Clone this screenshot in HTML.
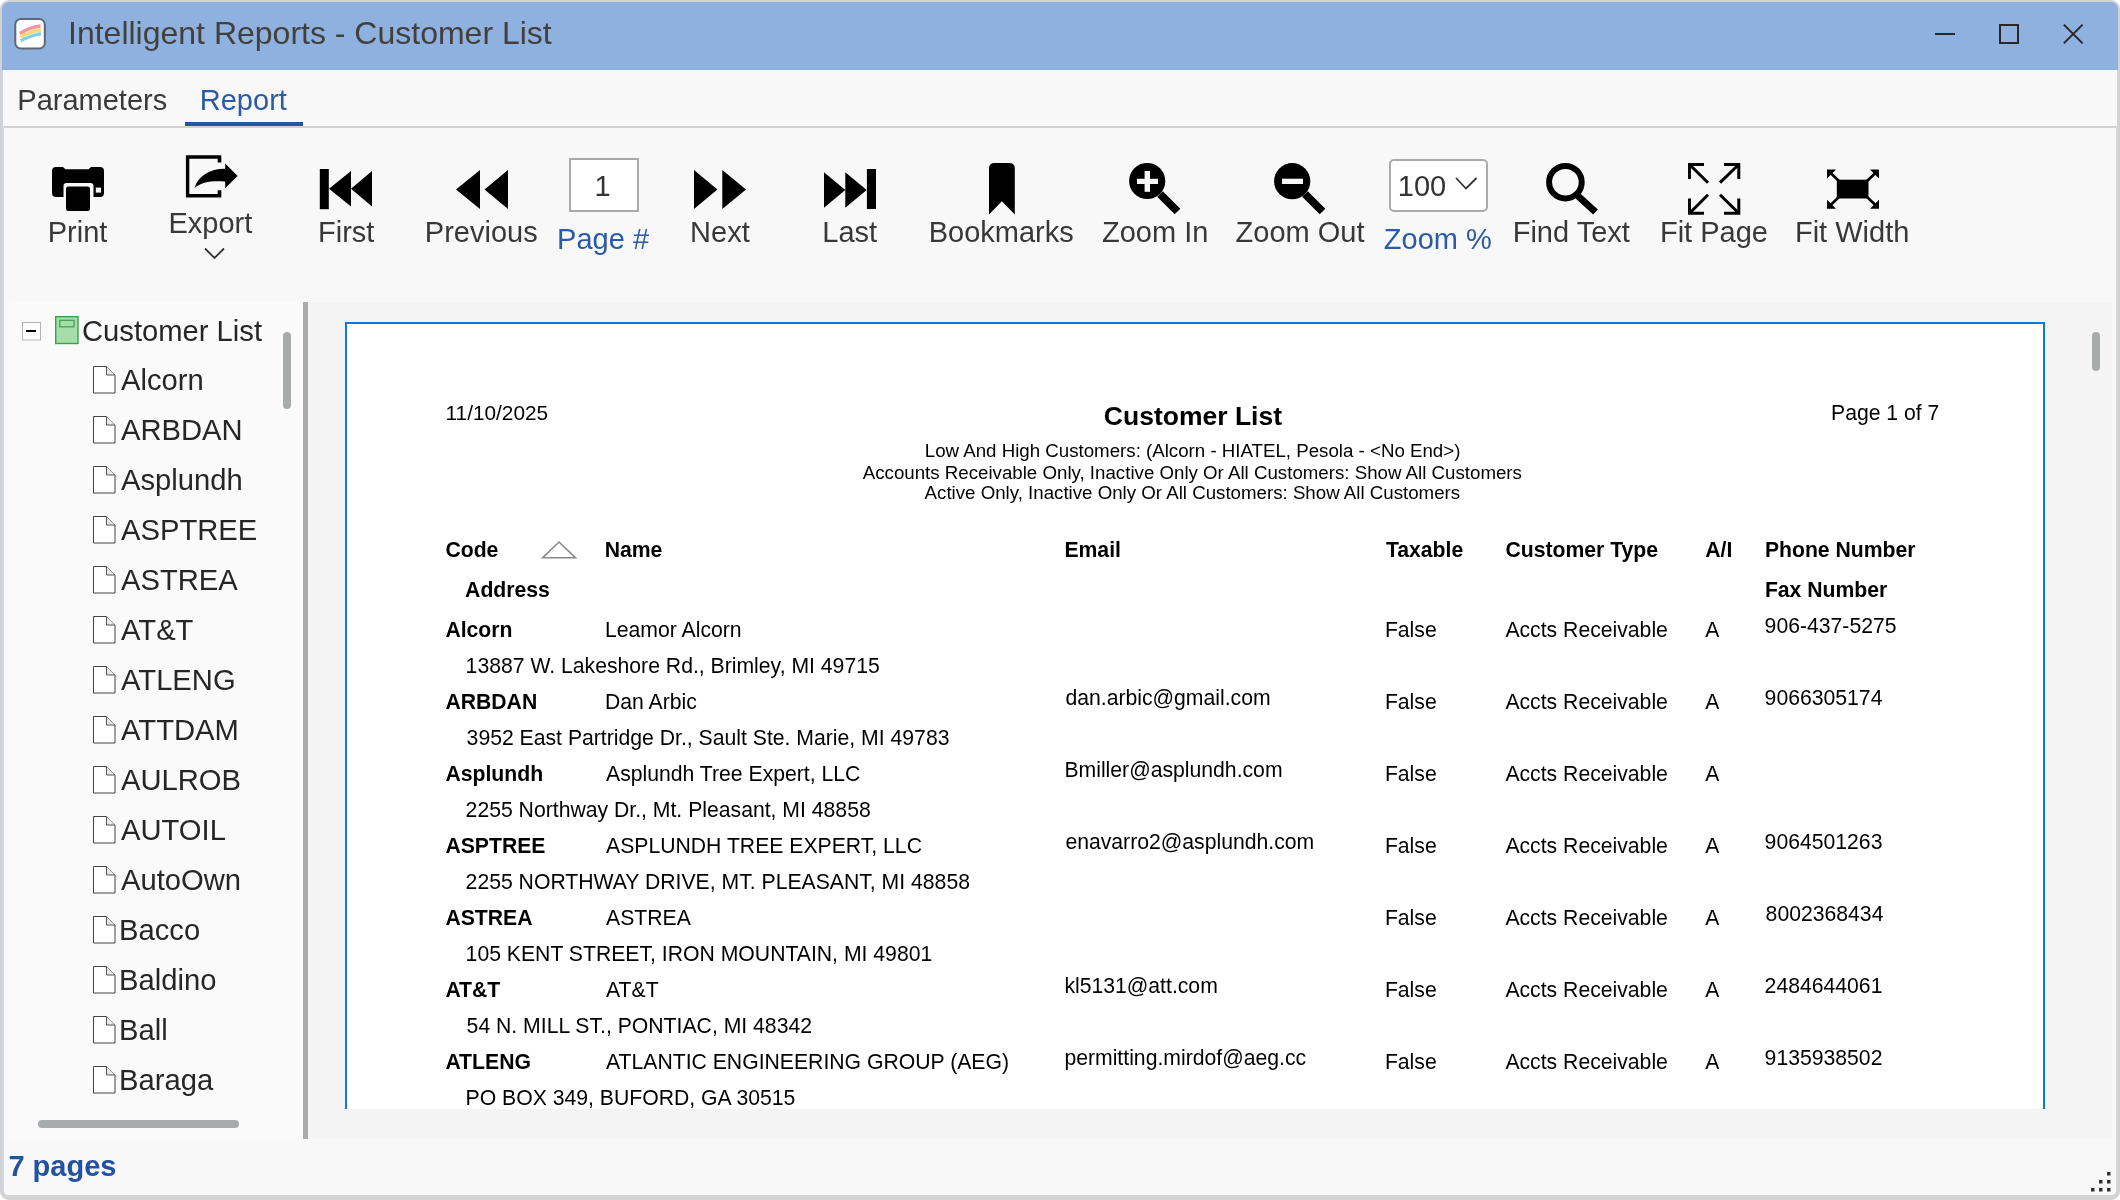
<!DOCTYPE html>
<html><head><meta charset="utf-8"><title>Intelligent Reports - Customer List</title><style>
html,body{margin:0;padding:0;}
body{width:2120px;height:1200px;position:relative;overflow:hidden;background:#ffffff;font-family:"Liberation Sans",sans-serif;}
.t{position:absolute;white-space:pre;}
#root{position:absolute;left:0;top:0;width:2120px;height:1200px;will-change:transform;}
.abs{position:absolute;}
svg{position:absolute;overflow:visible;}
</style></head><body><div id="root">
<div class="abs" style="left:0;top:0;width:2120px;height:1200px;background:#d2d2d2;border-radius:9px;"></div>
<div class="abs" style="left:3px;top:2px;width:2114px;height:1194px;background:#f8f8f8;border-radius:7px;overflow:hidden;"></div>
<div class="abs" style="left:2px;top:2px;width:2116px;height:68px;background:#8fb1df;border-radius:7px 7px 0 0;"></div>
<div class="abs" style="left:2px;top:70px;width:1px;height:1120px;background:#cfd5de;"></div><div class="abs" style="left:2117px;top:70px;width:1px;height:1120px;background:#cfd5de;"></div>
<div class="t" style="left:68.00px;top:17.00px;font-size:32px;line-height:32px;color:#423f3c;">Intelligent Reports - Customer List</div>
<svg style="left:0;top:0" width="2120" height="80">
<defs><filter id="bl" x="-20%" y="-20%" width="140%" height="140%"><feGaussianBlur stdDeviation="0.55"/></filter></defs>
<rect x="15.3" y="19" width="29.5" height="29.5" rx="5.5" fill="#fff" stroke="#5d6676" stroke-width="2" filter="url(#bl)"/>
<g filter="url(#bl)" fill="none" stroke-width="3.3" opacity="0.85">
<path d="M19.8 33.5 C26 29.5, 33 27, 40.5 26" stroke="#f4878e"/>
<path d="M20.3 37.2 C26.5 33.3, 33.5 31, 41 30" stroke="#fbd25c"/>
<path d="M20.8 40.8 C27 37, 34 35, 41 33.6" stroke="#63c9e8"/>
</g>
<line x1="1935" y1="34" x2="1955" y2="34" stroke="#2b2824" stroke-width="2"/>
<rect x="2000" y="25" width="18" height="18" fill="none" stroke="#2b2824" stroke-width="2"/>
<path d="M2063.8 24.6 L2082.6 43.4 M2082.6 24.6 L2063.8 43.4" stroke="#2b2824" stroke-width="2" fill="none"/>
</svg>
<div class="t" style="left:17.30px;top:86.00px;font-size:29px;line-height:29px;color:#3a3a3a;">Parameters</div>
<div class="t" style="left:199.80px;top:86.00px;font-size:29px;line-height:29px;color:#2b5aa6;">Report</div>
<div class="abs" style="left:185px;top:122px;width:118px;height:4px;background:#2456a4;"></div>
<div class="abs" style="left:3px;top:126px;width:2114px;height:2px;background:#d3d3d3;"></div>
<div class="abs" style="left:3px;top:128px;width:2112px;height:1067px;border:1px solid #d5d5d5;border-top:none;border-radius:0 0 5px 5px;background:#f8f8f8;"></div>
<div class="t" style="left:47.71px;top:218.00px;font-size:29px;line-height:29px;color:#383838;">Print</div>
<div class="t" style="left:168.42px;top:209.00px;font-size:29px;line-height:29px;color:#383838;">Export</div>
<div class="t" style="left:318.04px;top:218.00px;font-size:29px;line-height:29px;color:#383838;">First</div>
<div class="t" style="left:424.84px;top:218.00px;font-size:29px;line-height:29px;color:#383838;">Previous</div>
<div class="t" style="left:690.11px;top:218.00px;font-size:29px;line-height:29px;color:#383838;">Next</div>
<div class="t" style="left:822.32px;top:218.00px;font-size:29px;line-height:29px;color:#383838;">Last</div>
<div class="t" style="left:928.73px;top:218.00px;font-size:29px;line-height:29px;color:#383838;">Bookmarks</div>
<div class="t" style="left:1101.98px;top:218.00px;font-size:29px;line-height:29px;color:#383838;">Zoom In</div>
<div class="t" style="left:1235.56px;top:218.00px;font-size:29px;line-height:29px;color:#383838;">Zoom Out</div>
<div class="t" style="left:1512.70px;top:218.00px;font-size:29px;line-height:29px;color:#383838;">Find Text</div>
<div class="t" style="left:1659.96px;top:218.00px;font-size:29px;line-height:29px;color:#383838;">Fit Page</div>
<div class="t" style="left:1794.96px;top:218.00px;font-size:29px;line-height:29px;color:#383838;">Fit Width</div>
<div class="t" style="left:557.11px;top:225.00px;font-size:29px;line-height:29px;color:#2b5aa6;">Page #</div>
<div class="t" style="left:1383.81px;top:225.00px;font-size:29px;line-height:29px;color:#2b5aa6;">Zoom %</div>
<div class="abs" style="left:569px;top:158px;width:66px;height:50px;background:#fff;border:2px solid #a9a9a9;"></div>
<div class="t" style="left:594.50px;top:172.00px;font-size:29px;line-height:29px;color:#333;">1</div>
<div class="abs" style="left:1388.5px;top:159px;width:95px;height:49px;background:#fff;border:2px solid #ababab;border-radius:5px;"></div>
<div class="t" style="left:1397.87px;top:172.00px;font-size:29px;line-height:29px;color:#333;">100</div>
<svg style="left:0;top:0" width="2120" height="300">
<!-- print -->
<path d="M52 171 Q52 167 56 167 L63 167 L65.5 169.2 L88.5 169.2 L91 167 L100 167 Q104 167 104 171 L104 193 Q104 197 100 197 L93.5 197 L93.5 186 Q93.5 183 90.5 183 L66.5 183 Q63.5 183 63.5 186 L63.5 197 L56 197 Q52 197 52 193 Z" fill="#000"/>
<rect x="66" y="186.5" width="24" height="24.5" rx="2.5" fill="#000"/>
<rect x="95.8" y="187.6" width="5.2" height="5" fill="#f8f8f8"/>
<!-- export -->
<path d="M185.9 155.3 L221.3 155.3 L221.3 162.5 L217.7 162.5 L217.7 158.7 L189.3 158.7 L189.3 194 L217.7 194 L217.7 190.2 L221.3 190.2 L221.3 197.4 L185.9 197.4 Z" fill="#000"/>
<path d="M194.5 188 C198 176, 210 168.5, 225.2 168.7 L225.2 163.4 L237.6 175.9 L225.2 188.3 L225.2 181.5 C212 180.5, 201 182, 194.5 188 Z" fill="#000"/>
<path d="M205 248.5 L214.5 258 L224 248.5" stroke="#333" stroke-width="1.8" fill="none"/>
<!-- first -->
<rect x="319.8" y="169" width="9" height="40.2" fill="#000"/>
<path d="M329 188.7 L351 171 L351 206.4 Z M351 188.7 L372 171 L372 206.4 Z" fill="#000"/>
<!-- previous -->
<path d="M456 189.5 L480 170 L480 209 Z M484.5 189.5 L508 170 L508 209 Z" fill="#000"/>
<!-- next -->
<path d="M694 170 L717.4 189.5 L694 209 Z M722.3 170 L746 189.5 L722.3 209 Z" fill="#000"/>
<!-- last -->
<path d="M824 172.3 L845.3 190 L824 207.8 Z M845.3 172.3 L866.7 190 L845.3 207.8 Z" fill="#000"/>
<rect x="866.9" y="169" width="9.1" height="40" fill="#000"/>
<!-- bookmark -->
<path d="M989 168.5 Q989 163 994.5 163 L1009.3 163 Q1014.8 163 1014.8 168.5 L1014.8 214.6 L1001.9 201.3 L989 214.6 Z" fill="#000"/>
<!-- zoom in -->
<circle cx="1147.2" cy="181" r="18.1" fill="#000"/>
<line x1="1160" y1="194" x2="1177.5" y2="211.5" stroke="#000" stroke-width="8"/>
<rect x="1137" y="178.8" width="21" height="5.2" fill="#f8f8f8"/>
<rect x="1144.6" y="171" width="5.4" height="20.8" fill="#f8f8f8"/>
<!-- zoom out -->
<circle cx="1292.2" cy="181.2" r="18.1" fill="#000"/>
<line x1="1305" y1="194" x2="1322.5" y2="211.5" stroke="#000" stroke-width="8"/>
<rect x="1282" y="178.7" width="21" height="5.3" fill="#f8f8f8"/>
<!-- combobox chevron -->
<path d="M1456 178 L1466 188.5 L1476.5 178" stroke="#333" stroke-width="1.8" fill="none"/>
<!-- find -->
<circle cx="1565.4" cy="182.2" r="16.3" fill="none" stroke="#000" stroke-width="6"/>
<line x1="1578" y1="196" x2="1595.5" y2="212" stroke="#000" stroke-width="7"/>
<!-- fit page -->
<g stroke="#000" stroke-width="3" fill="none">
<path d="M1704 164.5 L1689.5 164.5 L1689.5 179"/>
<path d="M1689.5 164.5 L1708 182.7"/>
<path d="M1724 164.5 L1738.8 164.5 L1738.8 179"/>
<path d="M1738.8 164.5 L1720 182.7"/>
<path d="M1689.5 198.5 L1689.5 213.3 L1704 213.3"/>
<path d="M1689.5 213.3 L1708 194.7"/>
<path d="M1738.8 198.5 L1738.8 213.3 L1724 213.3"/>
<path d="M1738.8 213.3 L1720 194.7"/>
</g>
<!-- fit width -->
<rect x="1836.8" y="179.7" width="31.7" height="18.8" fill="#000"/>
<g stroke="#000" stroke-width="2.6" fill="none">
<path d="M1829 171.5 L1840 182"/><path d="M1877 171.5 L1866 182"/>
<path d="M1829 206.5 L1840 196"/><path d="M1877 206.5 L1866 196"/>
</g>
<path d="M1827 169.5 L1836 169.5 L1827 178.5 Z M1879 169.5 L1870 169.5 L1879 178.5 Z M1827 208.8 L1836 208.8 L1827 199.8 Z M1879 208.8 L1870 208.8 L1879 199.8 Z" fill="#000"/>
</svg>
<div class="abs" style="left:8px;top:302px;width:295px;height:837px;background:#fafafa;border-top-left-radius:4px;"></div>
<div class="abs" style="left:303px;top:302px;width:5px;height:837px;background:#ababab;"></div>
<div class="abs" style="left:308px;top:302px;width:1804px;height:837px;background:#f4f4f4;"></div>
<div class="abs" style="left:345px;top:322px;width:1696px;height:785px;background:#fff;border:2px solid #0f78d4;border-bottom:none;"></div>
<div class="abs" style="left:2092px;top:332px;width:8px;height:39px;background:#a8abac;border-radius:4px;"></div>
<div class="abs" style="left:283px;top:332px;width:8px;height:77px;background:#a8abac;border-radius:4px;"></div>
<div class="abs" style="left:38px;top:1120px;width:201px;height:8px;background:#a8abac;border-radius:4px;"></div>
<svg style="left:0;top:0" width="400" height="1200">
<rect x="22.5" y="322.5" width="18" height="17.5" fill="#fff" stroke="#b4b4b4" stroke-width="1"/>
<rect x="26" y="330" width="10" height="2" fill="#000"/>
<rect x="55.7" y="316.7" width="22.3" height="26.8" fill="#a6dea9" stroke="#3aa04a" stroke-width="1.4"/>
<rect x="59.8" y="320.3" width="14.2" height="6.5" fill="#a6dea9" stroke="#3aa04a" stroke-width="1.2"/>
<path d="M93.5 366.5 L106.5 366.5 L115 375 L115 393 L93.5 393 Z" fill="#fff" stroke="#444" stroke-width="1"/>
<path d="M106.5 366.5 L106.5 375 L115 375" fill="#e8e8e8" stroke="#555" stroke-width="1"/>
<path d="M93.5 416.5 L106.5 416.5 L115 425 L115 443 L93.5 443 Z" fill="#fff" stroke="#444" stroke-width="1"/>
<path d="M106.5 416.5 L106.5 425 L115 425" fill="#e8e8e8" stroke="#555" stroke-width="1"/>
<path d="M93.5 466.5 L106.5 466.5 L115 475 L115 493 L93.5 493 Z" fill="#fff" stroke="#444" stroke-width="1"/>
<path d="M106.5 466.5 L106.5 475 L115 475" fill="#e8e8e8" stroke="#555" stroke-width="1"/>
<path d="M93.5 516.5 L106.5 516.5 L115 525 L115 543 L93.5 543 Z" fill="#fff" stroke="#444" stroke-width="1"/>
<path d="M106.5 516.5 L106.5 525 L115 525" fill="#e8e8e8" stroke="#555" stroke-width="1"/>
<path d="M93.5 566.5 L106.5 566.5 L115 575 L115 593 L93.5 593 Z" fill="#fff" stroke="#444" stroke-width="1"/>
<path d="M106.5 566.5 L106.5 575 L115 575" fill="#e8e8e8" stroke="#555" stroke-width="1"/>
<path d="M93.5 616.5 L106.5 616.5 L115 625 L115 643 L93.5 643 Z" fill="#fff" stroke="#444" stroke-width="1"/>
<path d="M106.5 616.5 L106.5 625 L115 625" fill="#e8e8e8" stroke="#555" stroke-width="1"/>
<path d="M93.5 666.5 L106.5 666.5 L115 675 L115 693 L93.5 693 Z" fill="#fff" stroke="#444" stroke-width="1"/>
<path d="M106.5 666.5 L106.5 675 L115 675" fill="#e8e8e8" stroke="#555" stroke-width="1"/>
<path d="M93.5 716.5 L106.5 716.5 L115 725 L115 743 L93.5 743 Z" fill="#fff" stroke="#444" stroke-width="1"/>
<path d="M106.5 716.5 L106.5 725 L115 725" fill="#e8e8e8" stroke="#555" stroke-width="1"/>
<path d="M93.5 766.5 L106.5 766.5 L115 775 L115 793 L93.5 793 Z" fill="#fff" stroke="#444" stroke-width="1"/>
<path d="M106.5 766.5 L106.5 775 L115 775" fill="#e8e8e8" stroke="#555" stroke-width="1"/>
<path d="M93.5 816.5 L106.5 816.5 L115 825 L115 843 L93.5 843 Z" fill="#fff" stroke="#444" stroke-width="1"/>
<path d="M106.5 816.5 L106.5 825 L115 825" fill="#e8e8e8" stroke="#555" stroke-width="1"/>
<path d="M93.5 866.5 L106.5 866.5 L115 875 L115 893 L93.5 893 Z" fill="#fff" stroke="#444" stroke-width="1"/>
<path d="M106.5 866.5 L106.5 875 L115 875" fill="#e8e8e8" stroke="#555" stroke-width="1"/>
<path d="M93.5 916.5 L106.5 916.5 L115 925 L115 943 L93.5 943 Z" fill="#fff" stroke="#444" stroke-width="1"/>
<path d="M106.5 916.5 L106.5 925 L115 925" fill="#e8e8e8" stroke="#555" stroke-width="1"/>
<path d="M93.5 966.5 L106.5 966.5 L115 975 L115 993 L93.5 993 Z" fill="#fff" stroke="#444" stroke-width="1"/>
<path d="M106.5 966.5 L106.5 975 L115 975" fill="#e8e8e8" stroke="#555" stroke-width="1"/>
<path d="M93.5 1016.5 L106.5 1016.5 L115 1025 L115 1043 L93.5 1043 Z" fill="#fff" stroke="#444" stroke-width="1"/>
<path d="M106.5 1016.5 L106.5 1025 L115 1025" fill="#e8e8e8" stroke="#555" stroke-width="1"/>
<path d="M93.5 1066.5 L106.5 1066.5 L115 1075 L115 1093 L93.5 1093 Z" fill="#fff" stroke="#444" stroke-width="1"/>
<path d="M106.5 1066.5 L106.5 1075 L115 1075" fill="#e8e8e8" stroke="#555" stroke-width="1"/>
</svg>
<div class="t" style="left:82.00px;top:317.00px;font-size:29.2px;line-height:29.2px;color:#262626;">Customer List</div>
<div class="t" style="left:121.00px;top:366.00px;font-size:29.2px;line-height:29.2px;color:#262626;">Alcorn</div>
<div class="t" style="left:121.00px;top:416.00px;font-size:29.2px;line-height:29.2px;color:#262626;">ARBDAN</div>
<div class="t" style="left:121.00px;top:466.00px;font-size:29.2px;line-height:29.2px;color:#262626;">Asplundh</div>
<div class="t" style="left:121.00px;top:516.00px;font-size:29.2px;line-height:29.2px;color:#262626;">ASPTREE</div>
<div class="t" style="left:121.00px;top:566.00px;font-size:29.2px;line-height:29.2px;color:#262626;">ASTREA</div>
<div class="t" style="left:121.00px;top:616.00px;font-size:29.2px;line-height:29.2px;color:#262626;">AT&amp;T</div>
<div class="t" style="left:121.00px;top:666.00px;font-size:29.2px;line-height:29.2px;color:#262626;">ATLENG</div>
<div class="t" style="left:121.00px;top:716.00px;font-size:29.2px;line-height:29.2px;color:#262626;">ATTDAM</div>
<div class="t" style="left:121.00px;top:766.00px;font-size:29.2px;line-height:29.2px;color:#262626;">AULROB</div>
<div class="t" style="left:121.00px;top:816.00px;font-size:29.2px;line-height:29.2px;color:#262626;">AUTOIL</div>
<div class="t" style="left:121.00px;top:866.00px;font-size:29.2px;line-height:29.2px;color:#262626;">AutoOwn</div>
<div class="t" style="left:119.00px;top:916.00px;font-size:29.2px;line-height:29.2px;color:#262626;">Bacco</div>
<div class="t" style="left:119.00px;top:966.00px;font-size:29.2px;line-height:29.2px;color:#262626;">Baldino</div>
<div class="t" style="left:119.00px;top:1016.00px;font-size:29.2px;line-height:29.2px;color:#262626;">Ball</div>
<div class="t" style="left:119.00px;top:1066.00px;font-size:29.2px;line-height:29.2px;color:#262626;">Baraga</div>
<div class="t" style="left:8.40px;top:1152.00px;font-size:29px;line-height:29px;color:#2352a0;font-weight:bold;">7 pages</div>
<svg style="left:0;top:0" width="2120" height="1200"><rect x="2107.0" y="1172" width="3.5" height="3.5" fill="#333"/><rect x="2099.0" y="1180" width="3.5" height="3.5" fill="#333"/><rect x="2107.0" y="1180" width="3.5" height="3.5" fill="#333"/><rect x="2091.0" y="1188" width="3.5" height="3.5" fill="#333"/><rect x="2099.0" y="1188" width="3.5" height="3.5" fill="#333"/><rect x="2107.0" y="1188" width="3.5" height="3.5" fill="#333"/></svg>
<div class="abs" style="left:0;top:0;width:2120px;height:1108.6px;overflow:hidden;">
<div class="t" style="left:445.60px;top:403.00px;font-size:20.8px;line-height:20.8px;color:#000;">11/10/2025</div>
<div class="t" style="left:1103.83px;top:403.00px;font-size:26.5px;line-height:26.5px;color:#000;font-weight:bold;">Customer List</div>
<div class="t" style="left:1831.00px;top:402.00px;font-size:21.2px;line-height:21.2px;color:#000;">Page 1 of 7</div>
<div class="t" style="left:924.80px;top:442.00px;font-size:18.7px;line-height:18.7px;color:#000;">Low And High Customers: (Alcorn - HIATEL, Pesola - &lt;No End&gt;)</div>
<div class="t" style="left:862.76px;top:464.00px;font-size:18.7px;line-height:18.7px;color:#000;">Accounts Receivable Only, Inactive Only Or All Customers: Show All Customers</div>
<div class="t" style="left:924.58px;top:484.00px;font-size:18.7px;line-height:18.7px;color:#000;">Active Only, Inactive Only Or All Customers: Show All Customers</div>
<div class="t" style="left:445.40px;top:539.00px;font-size:21.2px;line-height:21.2px;color:#000;font-weight:bold;">Code</div>
<div class="t" style="left:604.70px;top:539.00px;font-size:21.2px;line-height:21.2px;color:#000;font-weight:bold;">Name</div>
<div class="t" style="left:1064.40px;top:539.00px;font-size:21.2px;line-height:21.2px;color:#000;font-weight:bold;">Email</div>
<div class="t" style="left:1385.90px;top:539.00px;font-size:21.2px;line-height:21.2px;color:#000;font-weight:bold;">Taxable</div>
<div class="t" style="left:1505.40px;top:539.00px;font-size:21.2px;line-height:21.2px;color:#000;font-weight:bold;">Customer Type</div>
<div class="t" style="left:1705.20px;top:539.00px;font-size:21.2px;line-height:21.2px;color:#000;font-weight:bold;">A/I</div>
<div class="t" style="left:1764.90px;top:539.00px;font-size:21.2px;line-height:21.2px;color:#000;font-weight:bold;">Phone Number</div>
<div class="t" style="left:465.10px;top:579.00px;font-size:21.2px;line-height:21.2px;color:#000;font-weight:bold;">Address</div>
<div class="t" style="left:1764.90px;top:579.00px;font-size:21.2px;line-height:21.2px;color:#000;font-weight:bold;">Fax Number</div>
<div class="t" style="left:445.40px;top:619.00px;font-size:21.2px;line-height:21.2px;color:#000;font-weight:bold;">Alcorn</div>
<div class="t" style="left:605.00px;top:619.00px;font-size:21.2px;line-height:21.2px;color:#000;">Leamor Alcorn</div>
<div class="t" style="left:1384.90px;top:619.00px;font-size:21.2px;line-height:21.2px;color:#000;">False</div>
<div class="t" style="left:1505.40px;top:619.00px;font-size:21.2px;line-height:21.2px;color:#000;">Accts Receivable</div>
<div class="t" style="left:1705.20px;top:619.00px;font-size:21.2px;line-height:21.2px;color:#000;">A</div>
<div class="t" style="left:1764.60px;top:615.00px;font-size:21.2px;line-height:21.2px;color:#000;">906-437-5275</div>
<div class="t" style="left:465.60px;top:655.00px;font-size:21.2px;line-height:21.2px;color:#000;">13887 W. Lakeshore Rd., Brimley, MI 49715</div>
<div class="t" style="left:445.40px;top:691.00px;font-size:21.2px;line-height:21.2px;color:#000;font-weight:bold;">ARBDAN</div>
<div class="t" style="left:605.00px;top:691.00px;font-size:21.2px;line-height:21.2px;color:#000;">Dan Arbic</div>
<div class="t" style="left:1065.40px;top:687.00px;font-size:21.2px;line-height:21.2px;color:#000;">dan.arbic@gmail.com</div>
<div class="t" style="left:1384.90px;top:691.00px;font-size:21.2px;line-height:21.2px;color:#000;">False</div>
<div class="t" style="left:1505.40px;top:691.00px;font-size:21.2px;line-height:21.2px;color:#000;">Accts Receivable</div>
<div class="t" style="left:1705.20px;top:691.00px;font-size:21.2px;line-height:21.2px;color:#000;">A</div>
<div class="t" style="left:1764.60px;top:687.00px;font-size:21.2px;line-height:21.2px;color:#000;">9066305174</div>
<div class="t" style="left:466.60px;top:727.00px;font-size:21.2px;line-height:21.2px;color:#000;">3952 East Partridge Dr., Sault Ste. Marie, MI 49783</div>
<div class="t" style="left:445.40px;top:763.00px;font-size:21.2px;line-height:21.2px;color:#000;font-weight:bold;">Asplundh</div>
<div class="t" style="left:606.00px;top:763.00px;font-size:21.2px;line-height:21.2px;color:#000;">Asplundh Tree Expert, LLC</div>
<div class="t" style="left:1064.40px;top:759.00px;font-size:21.2px;line-height:21.2px;color:#000;">Bmiller@asplundh.com</div>
<div class="t" style="left:1384.90px;top:763.00px;font-size:21.2px;line-height:21.2px;color:#000;">False</div>
<div class="t" style="left:1505.40px;top:763.00px;font-size:21.2px;line-height:21.2px;color:#000;">Accts Receivable</div>
<div class="t" style="left:1705.20px;top:763.00px;font-size:21.2px;line-height:21.2px;color:#000;">A</div>
<div class="t" style="left:465.60px;top:799.00px;font-size:21.2px;line-height:21.2px;color:#000;">2255 Northway Dr., Mt. Pleasant, MI 48858</div>
<div class="t" style="left:445.40px;top:835.00px;font-size:21.2px;line-height:21.2px;color:#000;font-weight:bold;">ASPTREE</div>
<div class="t" style="left:606.00px;top:835.00px;font-size:21.2px;line-height:21.2px;color:#000;">ASPLUNDH TREE EXPERT, LLC</div>
<div class="t" style="left:1065.40px;top:831.00px;font-size:21.2px;line-height:21.2px;color:#000;">enavarro2@asplundh.com</div>
<div class="t" style="left:1384.90px;top:835.00px;font-size:21.2px;line-height:21.2px;color:#000;">False</div>
<div class="t" style="left:1505.40px;top:835.00px;font-size:21.2px;line-height:21.2px;color:#000;">Accts Receivable</div>
<div class="t" style="left:1705.20px;top:835.00px;font-size:21.2px;line-height:21.2px;color:#000;">A</div>
<div class="t" style="left:1764.60px;top:831.00px;font-size:21.2px;line-height:21.2px;color:#000;">9064501263</div>
<div class="t" style="left:465.60px;top:871.00px;font-size:21.2px;line-height:21.2px;color:#000;">2255 NORTHWAY DRIVE, MT. PLEASANT, MI 48858</div>
<div class="t" style="left:445.40px;top:907.00px;font-size:21.2px;line-height:21.2px;color:#000;font-weight:bold;">ASTREA</div>
<div class="t" style="left:606.00px;top:907.00px;font-size:21.2px;line-height:21.2px;color:#000;">ASTREA</div>
<div class="t" style="left:1384.90px;top:907.00px;font-size:21.2px;line-height:21.2px;color:#000;">False</div>
<div class="t" style="left:1505.40px;top:907.00px;font-size:21.2px;line-height:21.2px;color:#000;">Accts Receivable</div>
<div class="t" style="left:1705.20px;top:907.00px;font-size:21.2px;line-height:21.2px;color:#000;">A</div>
<div class="t" style="left:1765.60px;top:903.00px;font-size:21.2px;line-height:21.2px;color:#000;">8002368434</div>
<div class="t" style="left:465.60px;top:943.00px;font-size:21.2px;line-height:21.2px;color:#000;">105 KENT STREET, IRON MOUNTAIN, MI 49801</div>
<div class="t" style="left:445.40px;top:979.00px;font-size:21.2px;line-height:21.2px;color:#000;font-weight:bold;">AT&amp;T</div>
<div class="t" style="left:606.00px;top:979.00px;font-size:21.2px;line-height:21.2px;color:#000;">AT&amp;T</div>
<div class="t" style="left:1064.40px;top:975.00px;font-size:21.2px;line-height:21.2px;color:#000;">kl5131@att.com</div>
<div class="t" style="left:1384.90px;top:979.00px;font-size:21.2px;line-height:21.2px;color:#000;">False</div>
<div class="t" style="left:1505.40px;top:979.00px;font-size:21.2px;line-height:21.2px;color:#000;">Accts Receivable</div>
<div class="t" style="left:1705.20px;top:979.00px;font-size:21.2px;line-height:21.2px;color:#000;">A</div>
<div class="t" style="left:1764.60px;top:975.00px;font-size:21.2px;line-height:21.2px;color:#000;">2484644061</div>
<div class="t" style="left:466.60px;top:1015.00px;font-size:21.2px;line-height:21.2px;color:#000;">54 N. MILL ST., PONTIAC, MI 48342</div>
<div class="t" style="left:445.40px;top:1051.00px;font-size:21.2px;line-height:21.2px;color:#000;font-weight:bold;">ATLENG</div>
<div class="t" style="left:606.00px;top:1051.00px;font-size:21.2px;line-height:21.2px;color:#000;">ATLANTIC ENGINEERING GROUP (AEG)</div>
<div class="t" style="left:1064.40px;top:1047.00px;font-size:21.2px;line-height:21.2px;color:#000;">permitting.mirdof@aeg.cc</div>
<div class="t" style="left:1384.90px;top:1051.00px;font-size:21.2px;line-height:21.2px;color:#000;">False</div>
<div class="t" style="left:1505.40px;top:1051.00px;font-size:21.2px;line-height:21.2px;color:#000;">Accts Receivable</div>
<div class="t" style="left:1705.20px;top:1051.00px;font-size:21.2px;line-height:21.2px;color:#000;">A</div>
<div class="t" style="left:1764.60px;top:1047.00px;font-size:21.2px;line-height:21.2px;color:#000;">9135938502</div>
<div class="t" style="left:465.60px;top:1087.00px;font-size:21.2px;line-height:21.2px;color:#000;">PO BOX 349, BUFORD, GA 30515</div>
<svg style="left:0;top:0" width="700" height="600"><path d="M542.5 557.8 L559 542 L575.5 557.8 Z" fill="none" stroke="#8a8a8a" stroke-width="1.6"/></svg>
</div>
</div></body></html>
